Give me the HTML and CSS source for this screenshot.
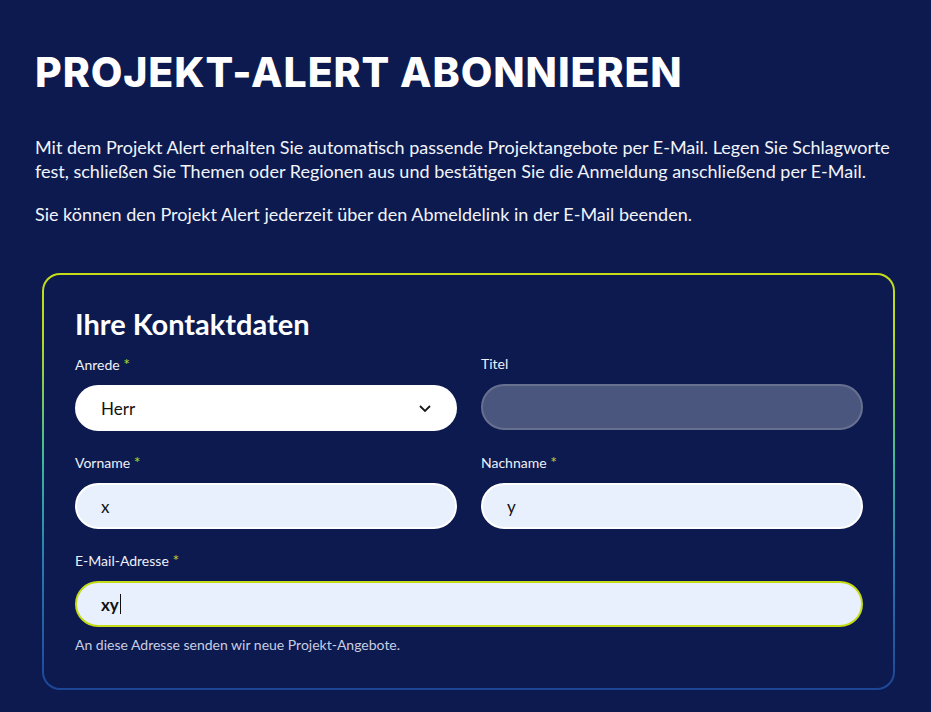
FILE: index.html
```
<!DOCTYPE html>
<html lang="de">
<head>
    <meta charset="UTF-8">
    <meta name="viewport" content="width=device-width, initial-scale=1.0">
    <title>Projekt-Alert abonnieren</title>
    <link rel="stylesheet" href="styles.css">
</head>
<body>
<main class="page">
    <h1>Projekt-Alert abonnieren</h1>
    <p class="intro">Mit dem Projekt Alert erhalten Sie automatisch passende Projektangebote per E-Mail. Legen Sie Schlagworte fest, schließen Sie Themen oder Regionen aus und bestätigen Sie die Anmeldung anschließend per E-Mail.</p>
    <p class="intro">Sie können den Projekt Alert jederzeit über den Abmeldelink in der E-Mail beenden.</p>

    <form class="card">
        <h2>Ihre Kontaktdaten</h2>
        <div class="grid">
            <div class="field">
                <label>Anrede <span class="req">*</span></label>
                <div class="select">
                    <span>Herr</span>
                    <svg width="14" height="9" viewBox="0 0 14 9"><path d="M2 2l5 5 5-5" fill="none" stroke="#1a1a1a" stroke-width="1.8"/></svg>
                </div>
            </div>
            <div class="field">
                <label>Titel</label>
                <div class="input disabled"></div>
            </div>
            <div class="field">
                <label>Vorname <span class="req">*</span></label>
                <div class="input filled">x</div>
            </div>
            <div class="field">
                <label>Nachname <span class="req">*</span></label>
                <div class="input filled">y</div>
            </div>
            <div class="field wide">
                <label>E-Mail-Adresse <span class="req">*</span></label>
                <div class="input filled focus">xy<span class="caret"></span></div>
                <p class="help">An diese Adresse senden wir neue Projekt-Angebote.</p>
            </div>
        </div>
    </form>
</main>
</body>
</html>
```

FILE: styles.css
```
body {
    margin: 0;
    background-color: #0c1a50;
    color: #f2f4fa;
    font-family: Lato, "Open Sans", sans-serif;
}
.page {
    padding: 48px 35px 0 35px;
}
h1 {
    margin: 0 0 38px 0;
    font-family: Inter, "Open Sans", sans-serif;
    font-weight: 800;
    font-size: 41px;
    letter-spacing: 0.9px;
    text-transform: uppercase;
    color: #ffffff;
    line-height: 1.2;
}
.intro {
    margin: 0 0 19px 0;
    font-size: 18px;
    line-height: 24px;
}
.card {
    margin: 47px 0 0 7px;
    width: 853px;
    box-sizing: border-box;
    padding: 31px 32px 35px 31px;
    border: 2px solid transparent;
    border-radius: 18px;
    background:
        linear-gradient(#0c1a50, #0c1a50) padding-box,
        linear-gradient(to bottom, #c6dc17 0%, #b6d921 15%, #3fb89a 45%, #2a7ab0 70%, #1d4596 100%) border-box;
}
.card h2 {
    margin: 0 0 14px 0;
    font-size: 29px;
    font-weight: 700;
    color: #ffffff;
    line-height: 36px;
}
.grid {
    display: grid;
    grid-template-columns: 382px 382px;
    column-gap: 24px;
    row-gap: 23px;
}
.field.wide {
    grid-column: 1 / 3;
}
.field label {
    display: block;
    font-size: 14px;
    line-height: 16px;
    margin-bottom: 12px;
    color: #eef0f7;
}
.req {
    color: #b5d82c;
    font-size: 16px;
}
.select,
.input {
    height: 46px;
    box-sizing: border-box;
    border-radius: 23px;
    border: 2px solid #ffffff;
    display: flex;
    align-items: center;
    padding: 0 24px;
    font-size: 17px;
    color: #111111;
}
.select {
    background-color: #ffffff;
    justify-content: space-between;
    padding-right: 23px;
}
.input.disabled {
    background-color: #4a567d;
    border-color: #67718f;
}
.input.filled {
    background-color: #e8f0fe;
}
.input.focus {
    border-color: #c3dc16;
    font-weight: 700;
}
.caret {
    display: inline-block;
    width: 1px;
    height: 20px;
    background-color: #111111;
    margin-left: 1px;
}
.help {
    margin: 9px 0 0 0;
    font-size: 14px;
    color: #c9cde0;
}
```
